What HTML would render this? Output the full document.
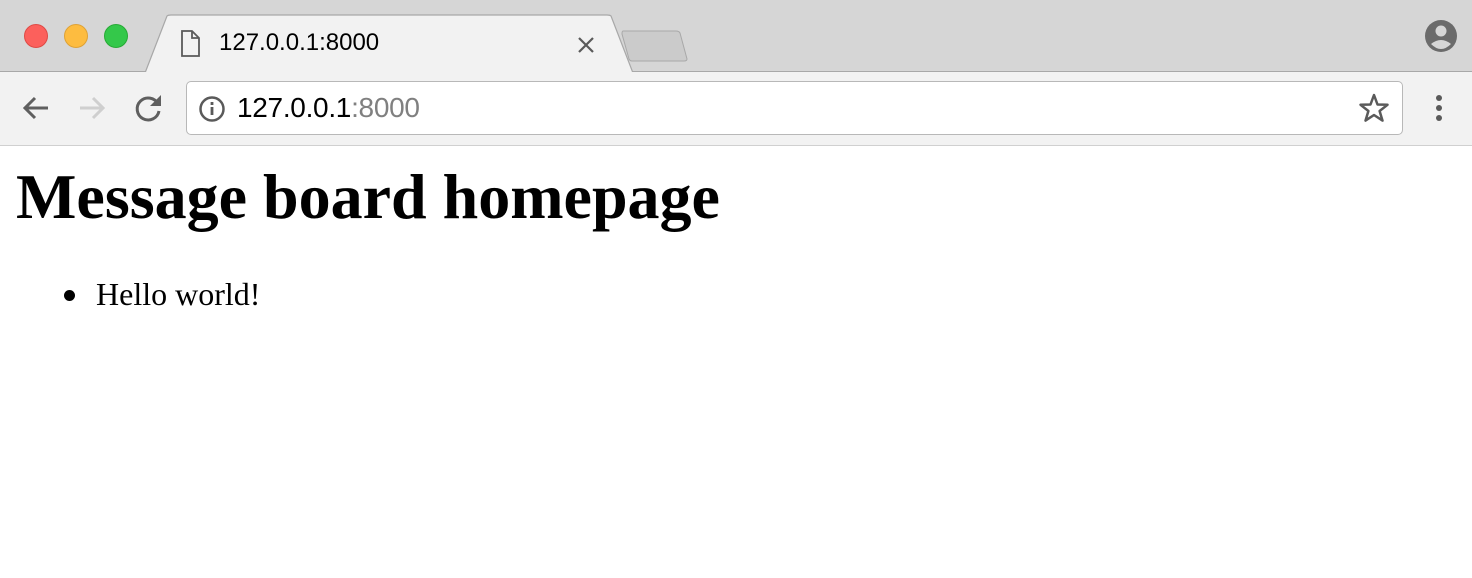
<!DOCTYPE html>
<html><head><style>
*{margin:0;padding:0;box-sizing:border-box}
body{width:1472px;height:578px;overflow:hidden;background:#fff;font-family:"Liberation Sans",sans-serif;position:relative}
.top{position:absolute;left:0;top:0;width:1472px;height:72px;background:#d6d6d6;border-bottom:1px solid #a8a8a8}
.bar{position:absolute;left:0;top:72px;width:1472px;height:74px;background:#f2f2f2;border-bottom:1px solid #d0d0d0}
.dot{position:absolute;top:24px;width:24px;height:24px;border-radius:50%}
.addr{position:absolute;left:186px;top:81px;width:1217px;height:54px;background:#fff;border:1px solid #b8b8b8;border-radius:5px}
h1{position:absolute;left:16px;top:160px;font:bold 64px "Liberation Serif",serif;color:#000;white-space:nowrap}
.li{position:absolute;left:96px;top:276px;font:32px "Liberation Serif",serif;color:#000}
.bul{position:absolute;left:64px;top:290px;width:11px;height:11px;border-radius:50%;background:#000}
</style></head><body>
<div class="top"></div>
<div class="dot" style="left:24px;background:#fc605c;border:1px solid #de4a45"></div>
<div class="dot" style="left:64px;background:#fdbc40;border:1px solid #dea236"></div>
<div class="dot" style="left:104px;background:#34c84a;border:1px solid #27aa35"></div>
<svg style="position:absolute;left:140px;top:14px" width="500" height="60">
<path d="M5 59 L27 2 Q28 1 31 1 L467 1 Q470 1 471 2 L493 59 Z" fill="#f2f2f2" stroke="#a8a8a8" stroke-width="1.2"/>
<rect x="3" y="58" width="495" height="3" fill="#f2f2f2"/>
</svg>
<svg style="position:absolute;left:620px;top:29px" width="70" height="35">
<path d="M3 2 L56 2 Q59 2 60 4 L67 30 Q67 32 64 32 L12 32 Q10 32 9 30 L2 5 Q2 2 3 2Z" fill="#cbcbcb" stroke="#a8a8a8" stroke-width="1"/>
</svg>
<svg style="position:absolute;left:180px;top:29px" width="22" height="30"><path d="M2 2 H12 L19 9 V27 H2 Z M12 2 V9 H19" fill="none" stroke="#5a5a5a" stroke-width="1.8"/></svg>
<div style="position:absolute;left:219px;top:29px;font-size:24px;color:#000">127.0.0.1:8000</div>
<svg style="position:absolute;left:576px;top:35px" width="20" height="20"><path d="M3 3 L17 17 M17 3 L3 17" stroke="#5a5a5a" stroke-width="2.2"/></svg>
<svg style="position:absolute;left:1424px;top:19px" width="34" height="34"><circle cx="17" cy="17" r="16" fill="#6b6b6b"/><circle cx="17" cy="12" r="5.5" fill="#d6d6d6"/><path d="M7 25 Q17 17 27 25 Q22 30 17 30 Q12 30 7 25Z" fill="#d6d6d6"/></svg>
<div class="bar"></div>
<svg style="position:absolute;left:20px;top:93px" width="32" height="30"><path d="M28 15 H5 M15 5 L5 15 L15 25" fill="none" stroke="#5f5f5f" stroke-width="3"/></svg>
<svg style="position:absolute;left:76px;top:93px" width="32" height="30"><path d="M4 15 H27 M17 5 L27 15 L17 25" fill="none" stroke="#cfcfcf" stroke-width="3"/></svg>
<svg style="position:absolute;left:133px;top:92px" width="32" height="32"><path d="M25 12 A11 11 0 1 0 26 19" fill="none" stroke="#5f5f5f" stroke-width="3"/><path d="M28 3 V14 H17 Z" fill="#5f5f5f"/></svg>
<div class="addr"></div>
<svg style="position:absolute;left:198px;top:95px" width="28" height="28"><circle cx="14" cy="14" r="11.5" fill="none" stroke="#5a5a5a" stroke-width="2.5"/><rect x="12.6" y="12" width="2.8" height="8" fill="#5a5a5a"/><rect x="12.6" y="7" width="2.8" height="3" fill="#5a5a5a"/></svg>
<div style="position:absolute;left:237px;top:92px;font-size:28px;color:#000;letter-spacing:-0.3px">127.0.0.1<span style="color:#808080">:8000</span></div>
<svg style="position:absolute;left:1358px;top:93px" width="32" height="30"><path d="M16 2 L19.5 11.5 L29.5 11.8 L21.6 18 L24.5 27.6 L16 22 L7.5 27.6 L10.4 18 L2.5 11.8 L12.5 11.5 Z" fill="none" stroke="#5a5a5a" stroke-width="2.5" stroke-linejoin="round"/></svg>
<svg style="position:absolute;left:1432px;top:94px" width="14" height="30"><circle cx="7" cy="4" r="3" fill="#5a5a5a"/><circle cx="7" cy="14" r="3" fill="#5a5a5a"/><circle cx="7" cy="24" r="3" fill="#5a5a5a"/></svg>
<h1>Message board homepage</h1>
<div class="bul"></div>
<div class="li">Hello world!</div>
</body></html>
